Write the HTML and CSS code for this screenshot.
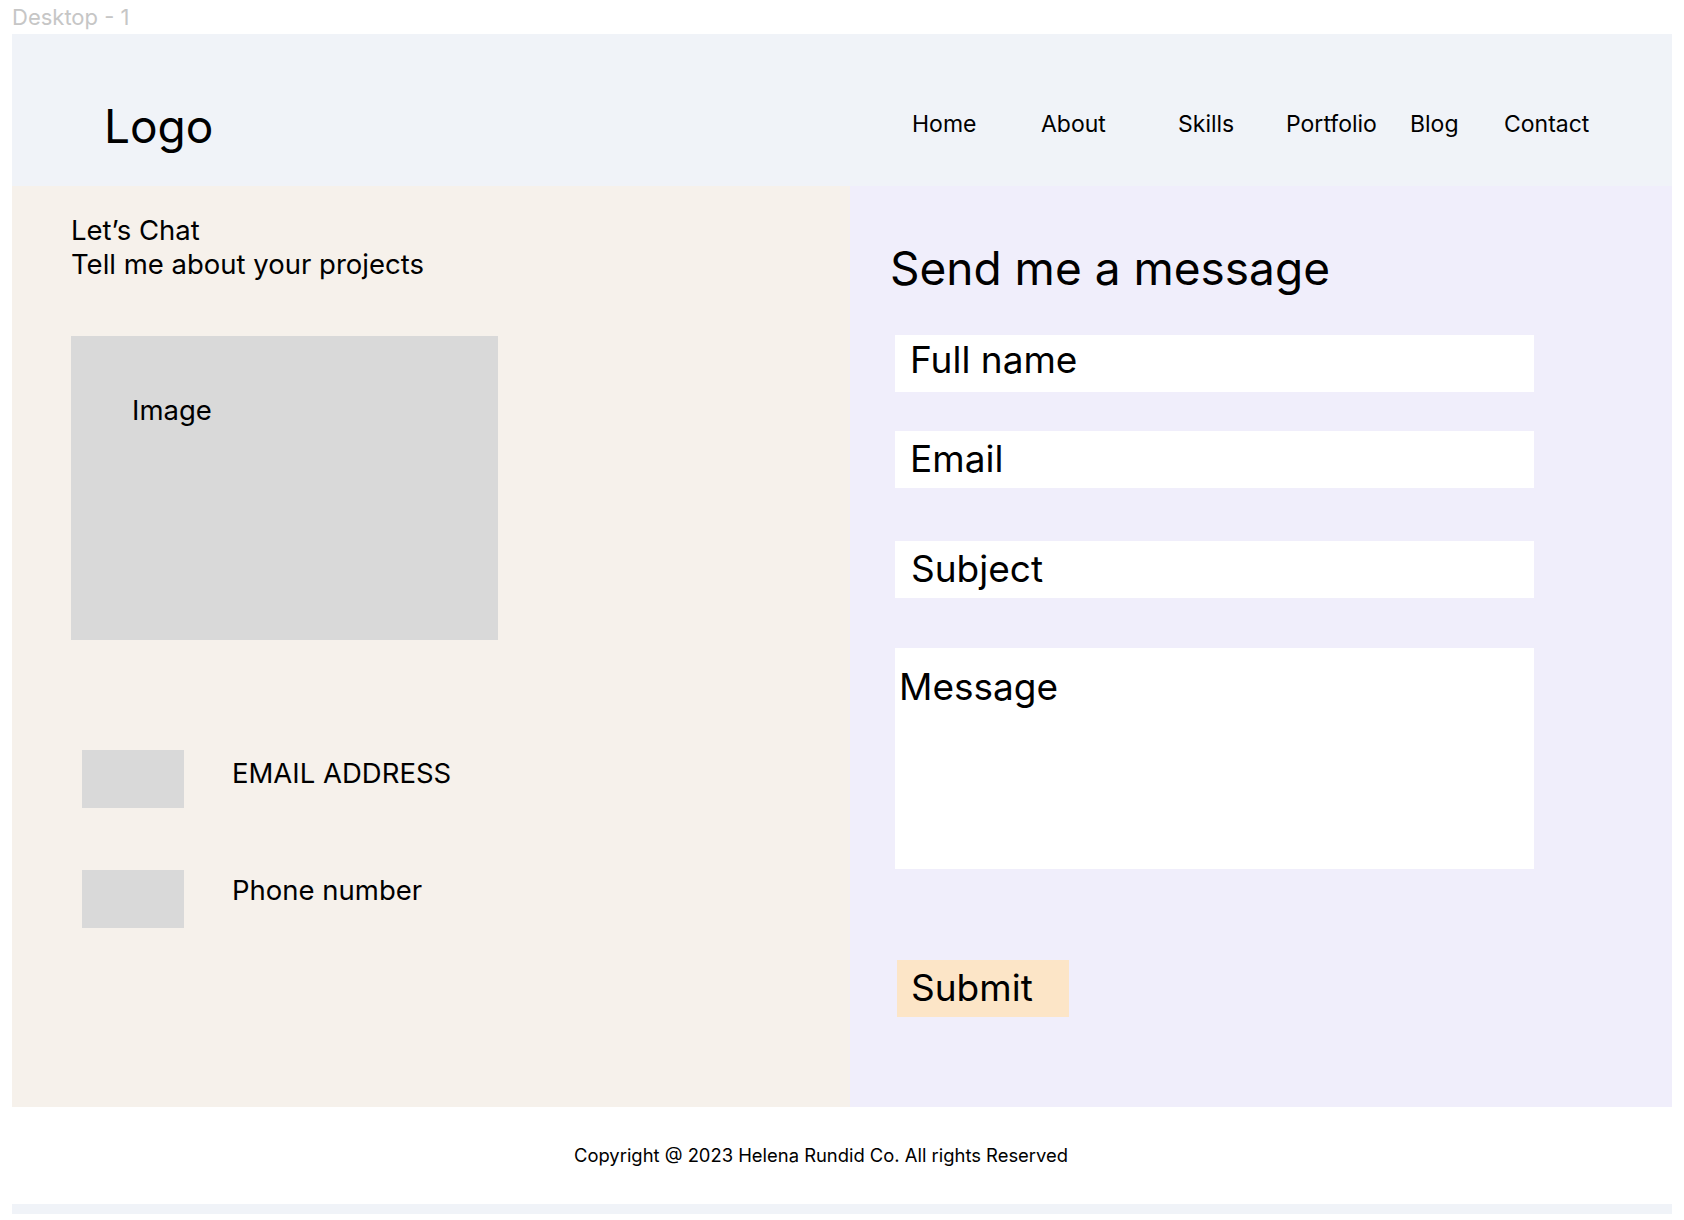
FILE: index.html
```html
<!DOCTYPE html>
<html lang="en">
<head>
<meta charset="utf-8">
<title>Desktop - 1</title>
<link rel="stylesheet" href="styles.css">
</head>
<body>
<div class="frame-label">Desktop - 1</div>
<div class="frame">
  <header class="header">
    <div class="logo">Logo</div>
    <nav class="nav">
      <a class="nav-item nav-home">Home</a>
      <a class="nav-item nav-about">About</a>
      <a class="nav-item nav-skills">Skills</a>
      <a class="nav-item nav-portfolio">Portfolio</a>
      <a class="nav-item nav-blog">Blog</a>
      <a class="nav-item nav-contact">Contact</a>
    </nav>
  </header>
  <main class="main">
    <section class="col-left">
      <div class="intro">
        <div>Let’s Chat</div>
        <div>Tell me about your projects</div>
      </div>
      <div class="image-box">Image</div>
      <div class="contact-row row-email">
        <div class="contact-icon"></div>
        <div class="contact-text text-email">EMAIL ADDRESS</div>
      </div>
      <div class="contact-row row-phone">
        <div class="contact-icon"></div>
        <div class="contact-text text-phone">Phone number</div>
      </div>
    </section>
    <section class="col-right">
      <h1 class="form-title">Send me a message</h1>
      <div class="form">
        <div class="field field-name">Full name</div>
        <div class="field field-email">Email</div>
        <div class="field field-subject">Subject</div>
        <div class="field-message">Message</div>
        <div class="submit">Submit</div>
      </div>
    </section>
  </main>
  <footer class="footer">Copyright @ 2023 Helena Rundid Co. All rights Reserved</footer>
</div>
</body>
</html>
```

FILE: styles.css
```css
* { box-sizing: border-box; }

body {
  margin: 0;
  background: #ffffff;
  font-family: Inter, "Noto Sans", "Liberation Sans", sans-serif;
  color: #000000;
}

.frame-label {
  height: 34px;
  padding: 1px 0 0 12px;
  font-size: 22px;
  line-height: 33px;
  color: #c6c6c6;
}

.frame {
  margin-left: 12px;
  width: 1660px;
  background: #f0f3f8;
  padding-bottom: 10px;
}

/* Header */
.header {
  height: 152px;
  display: flex;
  align-items: flex-start;
  padding-left: 92px;
}

.logo {
  width: 808px;
  margin-top: 64px;
  font-size: 46px;
  line-height: 56px;
}

.nav {
  display: flex;
  margin-top: 76px;
  font-size: 23px;
  line-height: 28px;
}

.nav-item { color: #000; text-decoration: none; }
.nav-home { width: 129px; }
.nav-about { width: 137px; }
.nav-skills { width: 108px; }
.nav-portfolio { width: 124px; }
.nav-blog { width: 94px; }

/* Main */
.main {
  display: flex;
  height: 921px;
}

.col-left {
  width: 838px;
  background: #f6f1eb;
  padding: 27px 0 0 59px;
  font-size: 27.5px;
  line-height: 34px;
}

.image-box {
  margin-top: 55px;
  width: 427px;
  height: 304px;
  background: #d9d9d9;
  padding: 57px 0 0 61px;
}

.contact-row {
  display: flex;
  align-items: flex-start;
  margin-left: 11px;
}

.row-email { margin-top: 110px; }
.row-phone { margin-top: 62px; }

.contact-icon {
  width: 102px;
  height: 58px;
  background: #d9d9d9;
}

.contact-text { margin-left: 48px; }
.text-email { padding-top: 6px; }
.text-phone { padding-top: 3px; }

.col-right {
  flex: 1;
  background: #f0eefb;
  padding: 54px 0 0 40px;
}

.form-title {
  margin: 0;
  font-weight: 400;
  font-size: 46px;
  line-height: 56px;
}

.form {
  margin-left: 5px;
  font-size: 37px;
  line-height: 44px;
}

.field {
  width: 639px;
  height: 57px;
  background: #ffffff;
  padding: 6px 0 0 15px;
}

.field-name { margin-top: 39px; padding-top: 3px; }
.field-email { margin-top: 39px; }
.field-subject { margin-top: 53px; padding-left: 16px; }

.field-message {
  margin-top: 50px;
  width: 639px;
  height: 221px;
  background: #ffffff;
  padding: 17px 0 0 4px;
}

.submit {
  margin-top: 91px;
  margin-left: 2px;
  width: 172px;
  height: 57px;
  background: #fce5c7;
  padding: 6px 0 0 14px;
}

/* Footer */
.footer {
  height: 97px;
  background: #ffffff;
  padding: 37px 0 0 562px;
  font-size: 18.4px;
  line-height: 22px;
}
```
